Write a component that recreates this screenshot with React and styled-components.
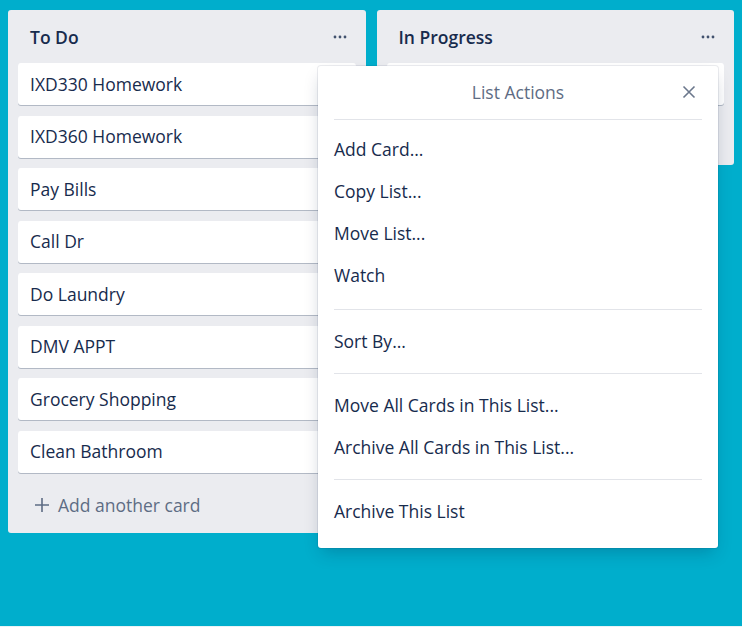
import React from "react";
import styled, { createGlobalStyle } from "styled-components";

const Global = createGlobalStyle`
  html, body { margin: 0; padding: 0; background: #e9f3f6; }
  body { font-family: "Open Sans", "Noto Sans", sans-serif; -webkit-font-smoothing: antialiased; }
  * { box-sizing: border-box; }
`;

const Board = styled.div`
  position: relative;
  height: 626px;
  background: #00aecc;
  padding: 10px 8px;
  display: flex;
  align-items: flex-start;
  gap: 11px;
`;

const List = styled.div`
  width: 358px;
  background: #ebecf0;
  border-radius: 3px;
  padding: 0 10px 8px;
  display: flex;
  flex-direction: column;
`;

const ListHeader = styled.div`
  height: 53px;
  display: flex;
  align-items: center;
  justify-content: space-between;
  padding: 0 8px 0 12px;
`;

const ListTitle = styled.h2`
  margin: 0;
  font-size: 17.5px;
  font-weight: 600;
  color: #172b4d;
`;

const Cards = styled.div`
  display: flex;
  flex-direction: column;
  gap: 10.5px;
`;

const Card = styled.div`
  height: 42px;
  background: #fff;
  border-radius: 3px;
  box-shadow: 0 1px 0 rgba(9, 30, 66, 0.25);
  display: flex;
  align-items: center;
  padding: 0 12px 1px;
  font-size: 17.5px;
  color: #172b4d;
`;

const Composer = styled.div`
  margin-top: 12px;
  height: 40px;
  display: flex;
  align-items: center;
  gap: 8px;
  padding-left: 16px;
  font-size: 17.5px;
  color: #5e6c84;
`;

const Popover = styled.div`
  position: absolute;
  left: 318px;
  top: 66px;
  width: 400px;
  background: #fff;
  border-radius: 3px;
  box-shadow: 0 8px 16px -4px rgba(9, 30, 66, 0.25), 0 0 0 1px rgba(9, 30, 66, 0.08);
`;

const PopHeader = styled.div`
  position: relative;
  height: 53px;
  display: flex;
  align-items: center;
  justify-content: center;
  padding-bottom: 1px;
  font-size: 17.5px;
  color: #5e6c84;
`;

const CloseBtn = styled.button`
  position: absolute;
  right: 21px;
  top: 18px;
  width: 16px;
  height: 16px;
  padding: 0;
  border: 0;
  background: none;
  display: flex;
  align-items: center;
  justify-content: center;
`;

const Divider = styled.hr`
  margin: 0 16px;
  border: 0;
  height: 1px;
  background: #e2e4e9;
`;

const Section = styled.ul`
  list-style: none;
  margin: 0;
  padding: ${(p) => (p.$first ? "8px 0 13px" : "10px 0 11px")};
  &:last-child { padding-bottom: 16px; }
`;

const Item = styled.li`
  height: 42px;
  display: flex;
  align-items: center;
  padding: 0 16px;
  font-size: 17.5px;
  color: #172b4d;
`;

const Dots = () => (
  <svg width="16" height="4" viewBox="0 0 16 4">
    <circle cx="3" cy="2" r="1.4" fill="#42526e" />
    <circle cx="8" cy="2" r="1.4" fill="#42526e" />
    <circle cx="13" cy="2" r="1.4" fill="#42526e" />
  </svg>
);

const Plus = () => (
  <svg width="16" height="16" viewBox="0 0 16 16">
    <path d="M8 1v14M1 8h14" stroke="#5e6c84" strokeWidth="1.6" />
  </svg>
);

const Close = () => (
  <svg width="14" height="14" viewBox="0 0 14 14">
    <path d="M1.5 1.5l11 11M12.5 1.5l-11 11" stroke="#6b778c" strokeWidth="1.6" />
  </svg>
);

const todo = [
  "IXD330 Homework",
  "IXD360 Homework",
  "Pay Bills",
  "Call Dr",
  "Do Laundry",
  "DMV APPT",
  "Grocery Shopping",
  "Clean Bathroom",
];

const sections = [
  ["Add Card...", "Copy List...", "Move List...", "Watch"],
  ["Sort By..."],
  ["Move All Cards in This List...", "Archive All Cards in This List..."],
  ["Archive This List"],
];

export default function App() {
  return (
    <>
      <Global />
      <Board>
        <List>
          <ListHeader>
            <ListTitle>To Do</ListTitle>
            <Dots />
          </ListHeader>
          <Cards>
            {todo.map((t) => (
              <Card key={t}>{t}</Card>
            ))}
          </Cards>
          <Composer>
            <Plus />
            Add another card
          </Composer>
        </List>
        <List>
          <ListHeader>
            <ListTitle>In Progress</ListTitle>
            <Dots />
          </ListHeader>
          <Cards>
            <Card />
          </Cards>
          <Composer>
            <Plus />
            Add another card
          </Composer>
        </List>
        <Popover>
          <PopHeader>
            List Actions
            <CloseBtn aria-label="Close">
              <Close />
            </CloseBtn>
          </PopHeader>
          {sections.map((s, i) => (
            <React.Fragment key={i}>
              <Divider />
              <Section $first={i === 0}>
                {s.map((it) => (
                  <Item key={it}>{it}</Item>
                ))}
              </Section>
            </React.Fragment>
          ))}
        </Popover>
      </Board>
    </>
  );
}
